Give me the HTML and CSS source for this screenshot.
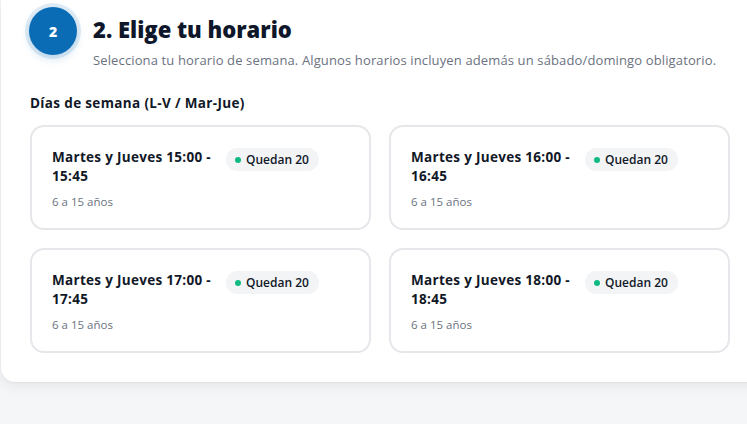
FILE: index.html
```html
<!DOCTYPE html>
<html lang="es">
<head>
<meta charset="utf-8">
<title>Elige tu horario</title>
<link rel="stylesheet" href="styles.css">
</head>
<body>
<section class="panel">
  <header class="step-head">
    <div class="step-num">2</div>
    <div class="step-text">
      <h2 class="step-title">2. Elige tu horario</h2>
      <p class="step-sub">Selecciona tu horario de semana. Algunos horarios incluyen además un sábado/domingo obligatorio.</p>
    </div>
  </header>
  <h3 class="group-label">Días de semana (L-V / Mar-Jue)</h3>
  <div class="slot-grid">
    <div class="slot">
      <div class="slot-top">
        <div class="slot-title">Martes y Jueves 15:00 - 15:45</div>
        <span class="pill"><span class="dot"></span>Quedan 20</span>
      </div>
      <div class="slot-age">6 a 15 años</div>
    </div>
    <div class="slot">
      <div class="slot-top">
        <div class="slot-title">Martes y Jueves 16:00 - 16:45</div>
        <span class="pill"><span class="dot"></span>Quedan 20</span>
      </div>
      <div class="slot-age">6 a 15 años</div>
    </div>
    <div class="slot">
      <div class="slot-top">
        <div class="slot-title">Martes y Jueves 17:00 - 17:45</div>
        <span class="pill"><span class="dot"></span>Quedan 20</span>
      </div>
      <div class="slot-age">6 a 15 años</div>
    </div>
    <div class="slot">
      <div class="slot-top">
        <div class="slot-title">Martes y Jueves 18:00 - 18:45</div>
        <span class="pill"><span class="dot"></span>Quedan 20</span>
      </div>
      <div class="slot-age">6 a 15 años</div>
    </div>
  </div>
</section>
</body>
</html>
```
FILE: styles.css
```css
* { box-sizing: border-box; }
html, body { margin: 0; padding: 0; }
body {
  background: #f5f6f8;
  font-family: "Open Sans", "Noto Sans", sans-serif;
  color: #111827;
  overflow: hidden;
  width: 747px;
  height: 424px;
}
.panel {
  background: #ffffff;
  margin-left: 1px;
  width: 780px;
  padding: 7px 0 29px 28px;
  border-radius: 0 0 0 14px;
  box-shadow: 0 4px 14px rgba(15, 23, 42, 0.07), 0 1px 2px rgba(15, 23, 42, 0.05);
}
.step-head {
  display: flex;
  align-items: flex-start;
  gap: 16px;
}
.step-num {
  width: 48px;
  height: 48px;
  flex: none;
  border-radius: 50%;
  background: #0b6cb6;
  color: #fff;
  font-weight: 800;
  font-size: 14px;
  display: flex;
  align-items: center;
  justify-content: center;
  box-shadow: 0 0 0 4px rgba(11, 108, 182, 0.12), 0 4px 10px rgba(11, 108, 182, 0.18);
}
.step-text { padding-top: 9px; }
.step-title {
  margin: 0;
  font-size: 22px;
  line-height: 26px;
  font-weight: 800;
  color: #0f172a;
}
.step-sub {
  margin: 9px 0 0;
  font-size: 13px;
  line-height: 18px;
  letter-spacing: 0.13px;
  color: #6b7280;
}
.group-label {
  margin: 25px 0 0 1px;
  font-size: 13.5px;
  line-height: 18px;
  letter-spacing: 0.35px;
  font-weight: 700;
  color: #111827;
}
.slot-grid {
  margin: 13px 0 0 1px;
  width: 700px;
  display: grid;
  grid-template-columns: 1fr 1fr;
  gap: 18px;
}
.slot {
  border: 2px solid #e6e7ea;
  border-radius: 14px;
  padding: 21px 20px 18px;
  background: #fff;
}
.slot-top {
  display: flex;
  align-items: flex-start;
  gap: 10px;
}
.slot-title {
  width: 164px;
  flex: none;
  font-size: 13.5px;
  line-height: 19px;
  letter-spacing: 0.3px;
  font-weight: 700;
  color: #111827;
}
.pill {
  display: inline-flex;
  align-items: center;
  gap: 5px;
  height: 23px;
  padding: 0 10px 0 9px;
  border-radius: 999px;
  background: #f3f4f6;
  font-size: 12px;
  font-weight: 600;
  color: #111827;
  white-space: nowrap;
}
.dot {
  width: 6px;
  height: 6px;
  border-radius: 50%;
  background: #10b981;
}
.slot-age {
  margin-top: 8px;
  font-size: 11.5px;
  line-height: 16px;
  color: #6b7280;
}
```
